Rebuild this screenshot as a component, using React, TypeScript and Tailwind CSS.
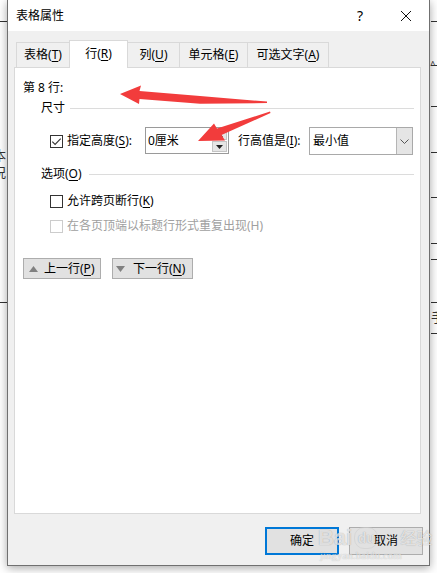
import React from "react";

function Check({ checked, disabled }: { checked?: boolean; disabled?: boolean }) {
  return (
    <span
      className={
        disabled
          ? "w-[13px] h-[13px] border border-[#cccccc] bg-white flex items-center justify-center shrink-0"
          : "w-[13px] h-[13px] border border-[#333333] bg-white flex items-center justify-center shrink-0"
      }
    >
      {checked && (
        <svg width="11" height="11" viewBox="0 0 11 11">
          <path d="M1.3 5.6 L4.1 8.4 L9.7 2.6" stroke="#333" strokeWidth="1.1" fill="none" />
        </svg>
      )}
    </span>
  );
}

function U({ children }: { children: React.ReactNode }) {
  return <span className="underline underline-offset-[2px] decoration-[1px]">{children}</span>;
}

const tabs = [
  { label: "表格", k: "T", w: "w-[54px]" },
  { label: "行", k: "R", w: "w-[59px]", active: true },
  { label: "列", k: "U", w: "w-[53px]" },
  { label: "单元格", k: "E", w: "w-[69px]" },
  { label: "可选文字", k: "A", w: "w-[82px]" },
];

export default function App() {
  const rightLines = [21, 65, 106, 152, 197, 243, 259, 302, 333];
  return (
    <div className="relative w-[437px] h-[573px] bg-white overflow-hidden font-['Noto_Sans','Noto_Sans_CJK_SC',sans-serif] text-[12px] text-black">
      {/* document behind the dialog */}
      <div className="absolute left-0 top-[21px] w-[8px] h-px bg-[#333333]" />
      <div className="absolute left-0 top-[302px] w-[8px] h-px bg-[#333333]" />
      <div className="absolute left-[-7px] top-[147px] text-[13px] leading-[16px] text-[#333]">本</div>
      <div className="absolute left-[-7px] top-[164px] text-[13px] leading-[16px] text-[#333]">况</div>
      {rightLines.map((y) => (
        <div key={y} className="absolute left-[431px] w-[6px] h-px bg-[#333333]" style={{ top: y }} />
      ))}
      <div className="absolute left-[431px] top-[309px] text-[13px] leading-[16px] text-[#333]">手</div>
      <div className="absolute left-[430px] top-[60px] text-[10px] leading-[10px] text-[#333]">^</div>

      {/* dialog */}
      <div className="relative z-10 ml-[7px] w-[423px] h-[566px] border border-t-0 border-[#707070] bg-[#f0f0f0] shadow-[0_2px_9px_rgba(0,0,0,0.35)] flex flex-col">
        {/* title bar */}
        <div className="h-[31px] bg-white flex items-center shrink-0">
          <div className="pl-[8px] leading-[16px]">表格属性</div>
          <div className="ml-auto flex h-full">
            <div className="w-[46px] h-full flex items-center justify-center text-[14px] leading-[16px]">?</div>
            <div className="w-[46px] h-full flex items-center justify-center">
              <svg width="12" height="12" viewBox="0 0 12 12">
                <path d="M1 1 L11 11 M11 1 L1 11" stroke="#111" strokeWidth="1" />
              </svg>
            </div>
          </div>
        </div>

        {/* tabs */}
        <div className="mt-[9px] ml-[8px] h-[27px] flex items-end shrink-0">
          {tabs.map((t, i) => (
            <div
              key={t.label}
              className={
                (t.active
                  ? "h-[28px] -mb-px bg-white relative z-10 pb-[2px] "
                  : "h-[25px] bg-[#f0f0f0] ") +
                (i > 0 ? "-ml-px " : "") +
                t.w +
                " border border-b-0 border-[#d9d9d9] flex items-center justify-center leading-[16px]"
              }
            >
              {t.label}(<U>{t.k}</U>)
            </div>
          ))}
        </div>

        {/* panel */}
        <div className="ml-[6px] w-[407px] h-[447px] border border-[#d9d9d9] bg-white pt-[12px] flex flex-col shrink-0">
          <div className="h-[16px] leading-[16px] pl-[8px]">第 8 行:</div>

          <div className="mt-[4px] h-[16px] flex items-center pl-[26px] pr-[6px]">
            <span className="leading-[16px]">尺寸</span>
            <div className="ml-[5px] flex-1 h-px bg-[#dcdcdc]" />
          </div>

          <div className="mt-[11px] h-[28px] flex items-center pl-[35px]">
            <Check checked />
            <span className="ml-[4px] w-[78px] leading-[16px]">
              指定高度(<U>S</U>):
            </span>
            <div className="w-[84px] h-[27px] border border-[#9a9a9a] bg-white flex items-stretch self-start">
              <span className="flex-1 pl-[2px] flex items-center leading-[16px]">0厘米</span>
              <div className="w-[16px] flex flex-col gap-[1px] py-[1px] pr-[1px]">
                <div className="flex-1 bg-[#e6e6e6] border border-[#c4c4c4] flex items-center justify-center">
                  <svg width="7" height="4" viewBox="0 0 7 4">
                    <path d="M0 4 L3.5 0 L7 4 Z" fill="#222" />
                  </svg>
                </div>
                <div className="flex-1 bg-[#e6e6e6] border border-[#c4c4c4] flex items-center justify-center">
                  <svg width="7" height="4" viewBox="0 0 7 4">
                    <path d="M0 0 L3.5 4 L7 0 Z" fill="#222" />
                  </svg>
                </div>
              </div>
            </div>
            <span className="ml-[9px] w-[71px] leading-[16px]">
              行高值是(<U>I</U>):
            </span>
            <div className="w-[104px] h-[28px] border border-[#a9a9a9] bg-white flex items-stretch">
              <span className="flex-1 pl-[3px] flex items-center leading-[16px]">最小值</span>
              <div className="w-[16px] bg-[#e5e5e5] border-l border-[#b5b5b5] flex items-center justify-center">
                <svg width="9" height="5" viewBox="0 0 9 5">
                  <path d="M0.5 0.5 L4.5 4.5 L8.5 0.5" stroke="#555" strokeWidth="1" fill="none" />
                </svg>
              </div>
            </div>
          </div>

          <div className="mt-[11px] h-[16px] flex items-center pl-[26px] pr-[6px]">
            <span className="leading-[16px]">
              选项(<U>O</U>)
            </span>
            <div className="ml-[7px] flex-1 h-px bg-[#dcdcdc]" />
          </div>

          <div className="mt-[11px] h-[16px] flex items-center pl-[35px]">
            <Check />
            <span className="ml-[4px] leading-[16px]">
              允许跨页断行(<U>K</U>)
            </span>
          </div>

          <div className="mt-[9px] h-[16px] flex items-center pl-[35px]">
            <Check disabled />
            <span className="ml-[4px] leading-[16px] text-[#a0a0a0]">在各页顶端以标题行形式重复出现(H)</span>
          </div>

          <div className="mt-[24px] flex pl-[8px]">
            <div className="w-[78px] h-[21px] bg-[#e1e1e1] border border-[#adadad] flex items-center pl-[5px]">
              <svg width="9" height="6" viewBox="0 0 9 6">
                <path d="M0 6 L4.5 0 L9 6 Z" fill="#808080" />
              </svg>
              <span className="ml-[6px] leading-[16px]">
                上一行(<U>P</U>)
              </span>
            </div>
            <div className="ml-[11px] w-[81px] h-[21px] bg-[#e1e1e1] border border-[#adadad] flex items-center pl-[3px]">
              <svg width="9" height="6" viewBox="0 0 9 6">
                <path d="M0 0 L4.5 6 L9 0 Z" fill="#808080" />
              </svg>
              <span className="ml-[8px] leading-[16px]">
                下一行(<U>N</U>)
              </span>
            </div>
          </div>
        </div>

        {/* bottom buttons */}
        <div className="mt-[13px] flex justify-end gap-[10px] pr-[6px]">
          <div className="w-[74px] h-[28px] bg-[#e1e1e1] border-2 border-[#0078d7] flex items-center justify-center leading-[16px]">
            确定
          </div>
          <div className="w-[74px] h-[28px] bg-[#e1e1e1] border border-[#adadad] flex items-center justify-center leading-[16px]">
            取消
          </div>
        </div>
      </div>

      {/* baidu watermark */}
      <div className="absolute z-20 left-[318px] top-[526px] flex items-center pointer-events-none text-white/70 [text-shadow:0_0_1px_rgba(0,0,0,0.35)]">
        <span className="font-['Liberation_Sans',sans-serif] font-bold text-[22px] leading-[24px]">Bai</span>
        <span className="ml-[2px] w-[24px] h-[22px] rounded-[10px] border border-[#cfcfcf]/60 flex items-center justify-center font-['Liberation_Sans',sans-serif] font-bold text-[14px] leading-[16px]">du</span>
        <span className="ml-[22px] text-[16px] leading-[18px]">经验</span>
      </div>
      <div className="absolute z-20 left-[320px] top-[549px] pointer-events-none font-['Liberation_Serif',serif] text-[11px] leading-[12px] text-white/70 [text-shadow:0_0_1px_rgba(0,0,0,0.3)]">
        jingyan.baidu.com
      </div>

      {/* red annotation arrows */}
      <svg className="absolute inset-0 z-30 pointer-events-none" width="437" height="573" viewBox="0 0 437 573">
        <path d="M120 94 L141 85.5 L139.5 91 L200 96 L267 101.6 L267 103 L200 103.8 L139.5 99 L139 104 Z" fill="#f23c3c" />
        <path d="M198 141 L214 123.5 L217 128.5 L270 111.5 L270.5 113 L221.5 135 L225 140.5 Z" fill="#f23c3c" />
      </svg>
    </div>
  );
}
